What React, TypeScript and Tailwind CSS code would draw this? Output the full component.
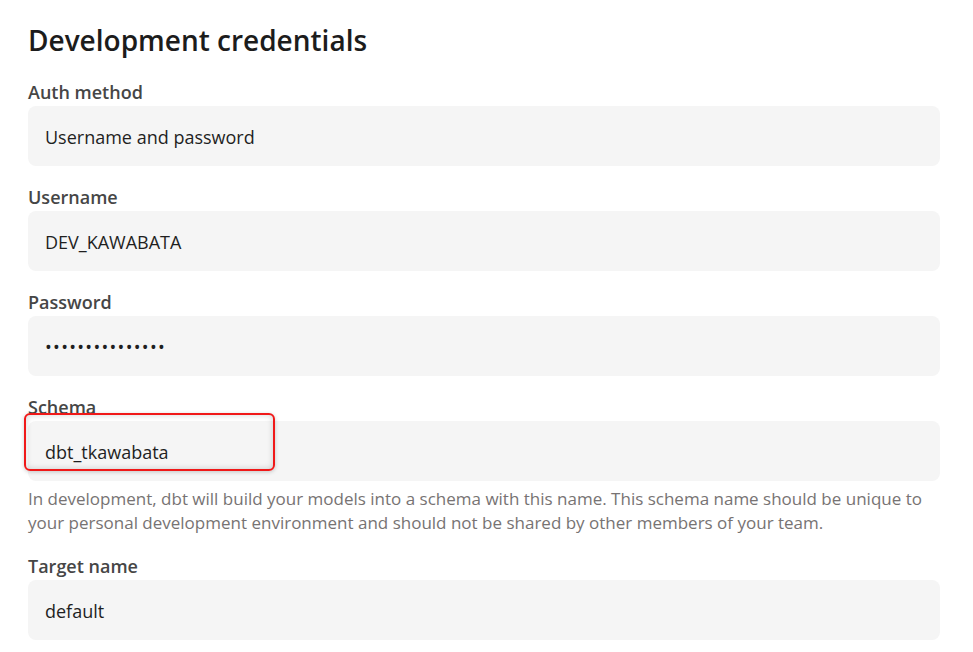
import React from "react";

const font = { fontFamily: '"Open Sans", "Noto Sans", "Liberation Sans", sans-serif' };

function Field({ label, value, valueClass, children }: { label: string; value: string; valueClass?: string; children?: React.ReactNode }) {
  return (
    <div className="relative">
      <div className="text-[18px] font-semibold leading-[24px] text-[#464646] mb-[2px]">{label}</div>
      <div className="h-[60px] rounded-[8px] bg-[#f5f5f5] flex items-center pl-[17px] pt-[3px] text-[18px] text-[#1f1f1f]">
        <span className={valueClass}>{value}</span>
      </div>
      {children}
    </div>
  );
}

export default function App() {
  return (
    <div className="bg-white w-[973px] h-[652px] overflow-hidden" style={font}>
      <div className="pl-[28px] pr-[33px] pt-[22px]">
        <h1 className="text-[28px] font-semibold leading-[36px] text-[#1c1c1c]">Development credentials</h1>
        <div className="mt-[22px] flex flex-col gap-[19px]">
          <Field label="Auth method" value="Username and password" />
          <Field label="Username" value="DEV_KAWABATA" />
          <Field label="Password" value="•••••••••••••••" valueClass="tracking-[1.3px]" />
          <div>
            <Field label="Schema" value="dbt_tkawabata">
              <div className="absolute left-[-4px] top-[18px] w-[251px] h-[58px] rounded-[6px] border-2 border-[#f01818] shadow-[inset_0_0_6px_rgba(0,0,0,0.18),0_1px_4px_rgba(0,0,0,0.2)]" />
            </Field>
            <p className="mt-[6px] text-[17px] leading-[24px] text-[#777373]">
              In development, dbt will build your models into a schema with this name. This schema name should be unique to your personal development environment and should not be shared by other members of your team.
            </p>
          </div>
          <Field label="Target name" value="default" />
        </div>
      </div>
    </div>
  );
}
